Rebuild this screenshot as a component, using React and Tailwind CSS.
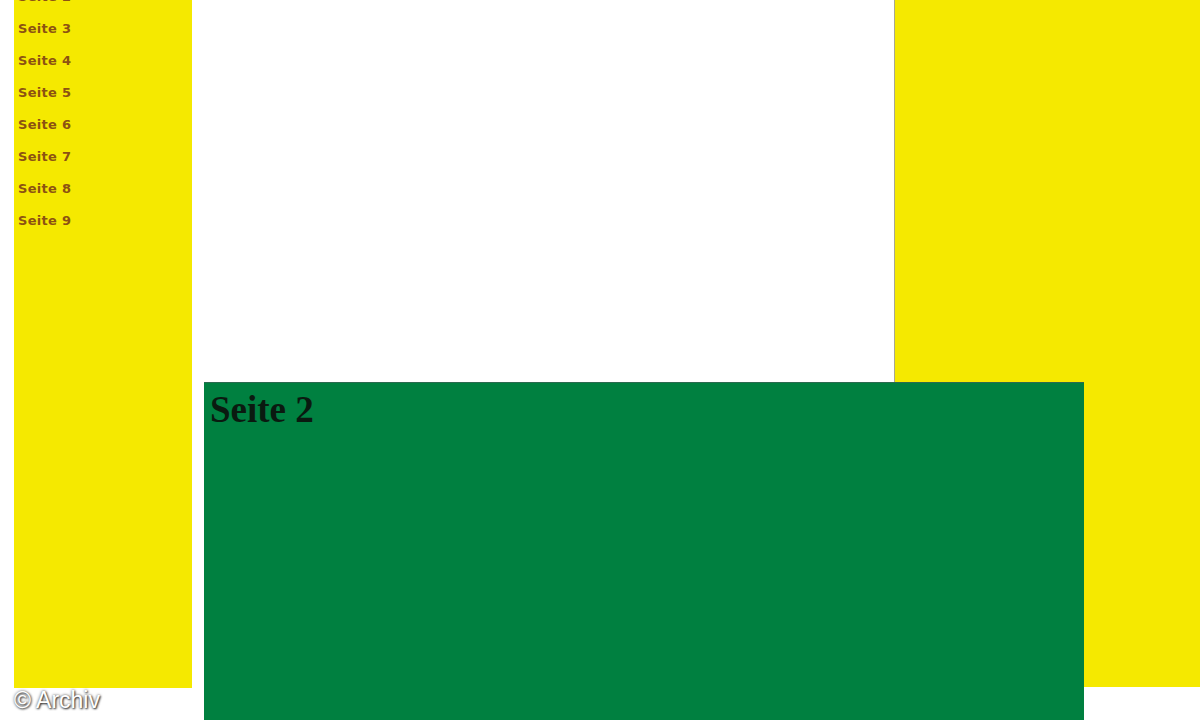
import React from "react";

const pages = ["Seite 2", "Seite 3", "Seite 4", "Seite 5", "Seite 6", "Seite 7", "Seite 8", "Seite 9"];

const App = () => {
  return (
    <div className="relative w-[1200px] h-[720px] overflow-hidden bg-white">
      <div className="flex items-start h-full">
        <div className="w-[14px] shrink-0" />
        {/* left nav */}
        <div className="w-[178px] h-[688px] shrink-0 bg-[#f5e900] overflow-hidden">
          <ul className="mt-[-19px] pl-[4px] font-['DejaVu_Sans',sans-serif] font-bold text-[13px] tracking-[0.3px] text-[#8c5212]">
            {pages.map((p) => (
              <li key={p} className="h-8 flex items-center">
                {p}
              </li>
            ))}
          </ul>
        </div>
        {/* middle */}
        <div className="w-[702px] h-full shrink-0 bg-white" />
        {/* right column */}
        <div className="flex-1 h-[687px] bg-[#f5e900] border-l border-[#a8a890]" />
      </div>

      {/* content box lying over the columns */}
      <div className="absolute left-[204px] top-[382px] w-[880px] h-[338px] bg-[#008040] border-t border-[#2c6a50]">
        <h1 className="pl-[6px] pt-[8px] font-['Liberation_Serif',serif] font-bold text-[37px] leading-none text-[#0a1a10]">
          Seite 2
        </h1>
      </div>

      <div className="absolute left-[14px] top-[683px] font-['Liberation_Sans',sans-serif] text-[23px] text-white [text-shadow:1px_1px_2px_#333,0_0_3px_#555]">
        © Archiv
      </div>
    </div>
  );
};

export default App;
